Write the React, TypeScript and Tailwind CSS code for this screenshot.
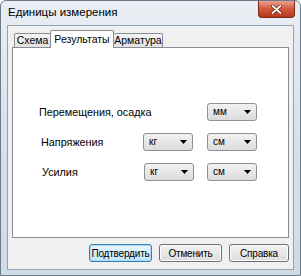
import React from "react";

const font = { fontFamily: '"Liberation Sans", Arial, sans-serif' };

function Combo({ value, w = "w-[50px]" }: { value: string; w?: string }) {
  return (
    <div
      className={`${w} h-[18px] flex items-center justify-between pl-[5px] pr-[5px] rounded-[3px] border border-[#8e8f8f] bg-gradient-to-b from-[#f2f2f2] to-[#dcdcdc] text-[10px] text-black`}
    >
      <span className="leading-none">{value}</span>
      <svg width="7" height="4" viewBox="0 0 7 4">
        <path d="M0 0 H7 L3.5 4 Z" fill="#000" />
      </svg>
    </div>
  );
}

function Btn({ label, focused }: { label: string; focused?: boolean }) {
  return (
    <div
      className={`h-[18px] flex items-center justify-center rounded-[3px] border ${
        focused
          ? "border-[#3c7fb1] bg-gradient-to-b from-[#eaf6fd] to-[#bee6fd] shadow-[inset_0_0_0_1px_#a7d9f5]"
          : "border-[#707070] bg-gradient-to-b from-[#f2f2f2] to-[#dddddd] shadow-[inset_0_0_0_1px_#fcfcfc]"
      } text-[10px] tracking-[-0.2px] text-black`}
      style={{ width: label === "Справка" ? 60 : 63 }}
    >
      {label}
    </div>
  );
}

export default function App() {
  return (
    <div style={font} className="w-[301px] h-[276px] bg-white">
      <div className="w-[301px] h-[276px] flex flex-col rounded-t-[6px] border border-[#6d7a88] bg-gradient-to-b from-[#e9eef3] via-[#d7e1eb] to-[#cfdbe7]">
        {/* title bar */}
        <div className="h-[24px] flex items-start justify-between">
          <span className="pl-[7px] pt-[6px] text-[11.5px] leading-none text-black">
            Единицы измерения
          </span>
          <div className="mr-[5px] w-[37px] h-[17px] flex items-center justify-center rounded-b-[4px] border border-t-0 border-[#7a2a1c] bg-gradient-to-b from-[#eaa08a] via-[#d2573a] to-[#b8381c]">
            <svg width="11" height="9" viewBox="0 0 11 9">
              <path
                d="M1.5 1 L9.5 8 M9.5 1 L1.5 8"
                stroke="#4a1a10"
                strokeWidth="3"
                strokeLinecap="round"
              />
              <path
                d="M1.5 1 L9.5 8 M9.5 1 L1.5 8"
                stroke="#ffffff"
                strokeWidth="1.8"
                strokeLinecap="round"
              />
            </svg>
          </div>
        </div>
        {/* client area */}
        <div className="flex-1 mx-[6px] mb-[5px] border border-[#94a3b4] bg-[#f0f0f0] flex flex-col">
          <div className="pt-[4px] pl-[4px] pr-[4px] flex flex-col">
            {/* tabs */}
            <div className="flex items-end h-[17px] pl-[2px] relative z-10">
              <div className="h-[14px] w-[37px] flex items-center justify-center border border-b-0 border-[#898c95] bg-gradient-to-b from-[#f4f4f4] to-[#e2e2e2] text-[10.5px] leading-none rounded-t-[2px]">
                Схема
              </div>
              <div className="h-[18px] -mb-[1px] w-[64px] flex items-start pt-[3px] justify-center border border-b-0 border-[#898c95] bg-white text-[10.5px] leading-none rounded-t-[2px] -ml-[1px]">
                Результаты
              </div>
              <div className="h-[14px] w-[49px] flex items-center justify-center border border-b-0 border-l-0 border-[#898c95] bg-gradient-to-b from-[#f4f4f4] to-[#e2e2e2] text-[10.5px] leading-none rounded-t-[2px]">
                Арматура
              </div>
            </div>
            {/* panel */}
            <div className="h-[191px] border border-[#898c95] bg-white flex flex-col">
              <div className="pt-[55px] pl-[26px] flex items-center">
                <span className="w-[168px] text-[10.8px] text-black">Перемещения, осадка</span>
                <Combo value="мм" />
              </div>
              <div className="pt-[12px] pl-[28px] flex items-center">
                <span className="w-[102px] text-[10.8px] text-black">Напряжения</span>
                <Combo value="кг" />
                <div className="w-[14px]" />
                <Combo value="см" />
              </div>
              <div className="pt-[12px] pl-[29px] flex items-center">
                <span className="w-[102px] text-[10.8px] text-black">Усилия</span>
                <Combo value="кг" />
                <div className="w-[13px]" />
                <Combo value="см" />
              </div>
            </div>
          </div>
          {/* buttons */}
          <div className="flex justify-end gap-[7px] pr-[4px] pt-[6px]">
            <Btn label="Подтвердить" focused />
            <Btn label="Отменить" />
            <Btn label="Справка" />
          </div>
        </div>
      </div>
    </div>
  );
}
